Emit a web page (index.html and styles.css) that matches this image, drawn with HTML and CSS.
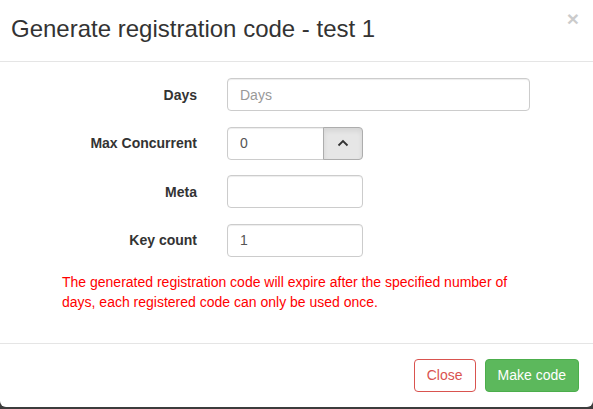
FILE: index.html
```html
<!DOCTYPE html>
<html>
<head>
<meta charset="utf-8">
<link rel="stylesheet" href="styles.css">
</head>
<body>
<div class="modal">
  <div class="modal-header">
    <h4 class="modal-title">Generate registration code - test 1</h4>
    <button class="close" type="button">&times;</button>
  </div>
  <div class="modal-body">
    <div class="form-row">
      <label class="form-label">Days</label>
      <input class="form-control wide" type="text" placeholder="Days">
    </div>
    <div class="form-row">
      <label class="form-label">Max Concurrent</label>
      <div class="input-group">
        <input class="form-control group-input" type="text" value="0">
        <button class="spin-btn" type="button">
          <svg width="12" height="8" viewBox="0 0 12 8"><path d="M1.5 6.5 L6 2 L10.5 6.5" fill="none" stroke="#333" stroke-width="1.8"/></svg>
        </button>
      </div>
    </div>
    <div class="form-row">
      <label class="form-label">Meta</label>
      <input class="form-control narrow" type="text">
    </div>
    <div class="form-row">
      <label class="form-label">Key count</label>
      <input class="form-control narrow" type="text" value="1">
    </div>
    <p class="note">The generated registration code will expire after the specified number of days, each registered code can only be used once.</p>
  </div>
  <div class="modal-footer">
    <button class="btn btn-close" type="button">Close</button>
    <button class="btn btn-success" type="button">Make code</button>
  </div>
</div>
</body>
</html>
```

FILE: styles.css
```css
html {
  background: #3c3c3c;
}
body {
  margin: 0;
  font-family: "Liberation Sans", Arial, sans-serif;
  font-size: 14px;
  color: #333;
}
.modal {
  width: 593px;
  height: 407px;
  background: #fff;
  border-radius: 0 0 6px 6px;
  display: flex;
  flex-direction: column;
  position: relative;
}
.modal-header {
  padding: 13px 15px 17px 11px;
  border-bottom: 1px solid #e5e5e5;
}
.modal-title {
  margin: 0;
  font-size: 24px;
  font-weight: normal;
  line-height: 31px;
  color: #333;
}
.close {
  position: absolute;
  top: 8px;
  right: 14px;
  padding: 0;
  border: 0;
  background: transparent;
  font-family: "Liberation Sans", Arial, sans-serif;
  font-size: 21px;
  font-weight: bold;
  line-height: 1;
  color: #000;
  opacity: 0.2;
}
.modal-body {
  padding: 16px 15px 15px 15px;
  flex: 1;
}
.form-row {
  display: grid;
  grid-template-columns: 182px auto;
  column-gap: 30px;
  align-items: center;
  margin-bottom: 15.5px;
}
.form-label {
  text-align: right;
  font-weight: bold;
  color: #333;
}
.form-control {
  box-sizing: border-box;
  height: 33px;
  padding: 6px 12px;
  font-family: "Liberation Sans", Arial, sans-serif;
  font-size: 14px;
  color: #555;
  background: #fff;
  border: 1px solid #ccc;
  border-radius: 4px;
  box-shadow: inset 0 1px 1px rgba(0,0,0,0.075);
  outline: none;
}
.form-control::placeholder {
  color: #999;
}
.wide {
  width: 303px;
}
.narrow {
  width: 136px;
}
.input-group {
  display: flex;
  width: 136px;
}
.group-input {
  width: 97px;
  border-radius: 4px 0 0 4px;
}
.spin-btn {
  box-sizing: border-box;
  width: 40px;
  height: 33px;
  margin-left: -1px;
  padding: 0;
  border: 1px solid #adadad;
  border-radius: 0 4px 4px 0;
  background: #e6e6e6;
  box-shadow: inset 0 3px 5px rgba(0,0,0,0.08);
  display: flex;
  align-items: center;
  justify-content: center;
}
.note {
  margin: 0 0 0 47px;
  width: 467px;
  color: #f00;
  line-height: 20px;
}
.modal-footer {
  padding: 15px 14px 15px 15px;
  border-top: 1px solid #e5e5e5;
  display: flex;
  justify-content: flex-end;
  gap: 9px;
}
.btn {
  box-sizing: border-box;
  height: 33px;
  padding: 6px 12px;
  font-family: "Liberation Sans", Arial, sans-serif;
  font-size: 14px;
  line-height: 19px;
  white-space: nowrap;
  border-radius: 4px;
  border: 1px solid transparent;
}
.btn-close {
  background: #fff;
  border-color: #d9534f;
  color: #d9534f;
}
.btn-success {
  background: #5cb85c;
  border-color: #4cae4c;
  color: #fff;
}
```
